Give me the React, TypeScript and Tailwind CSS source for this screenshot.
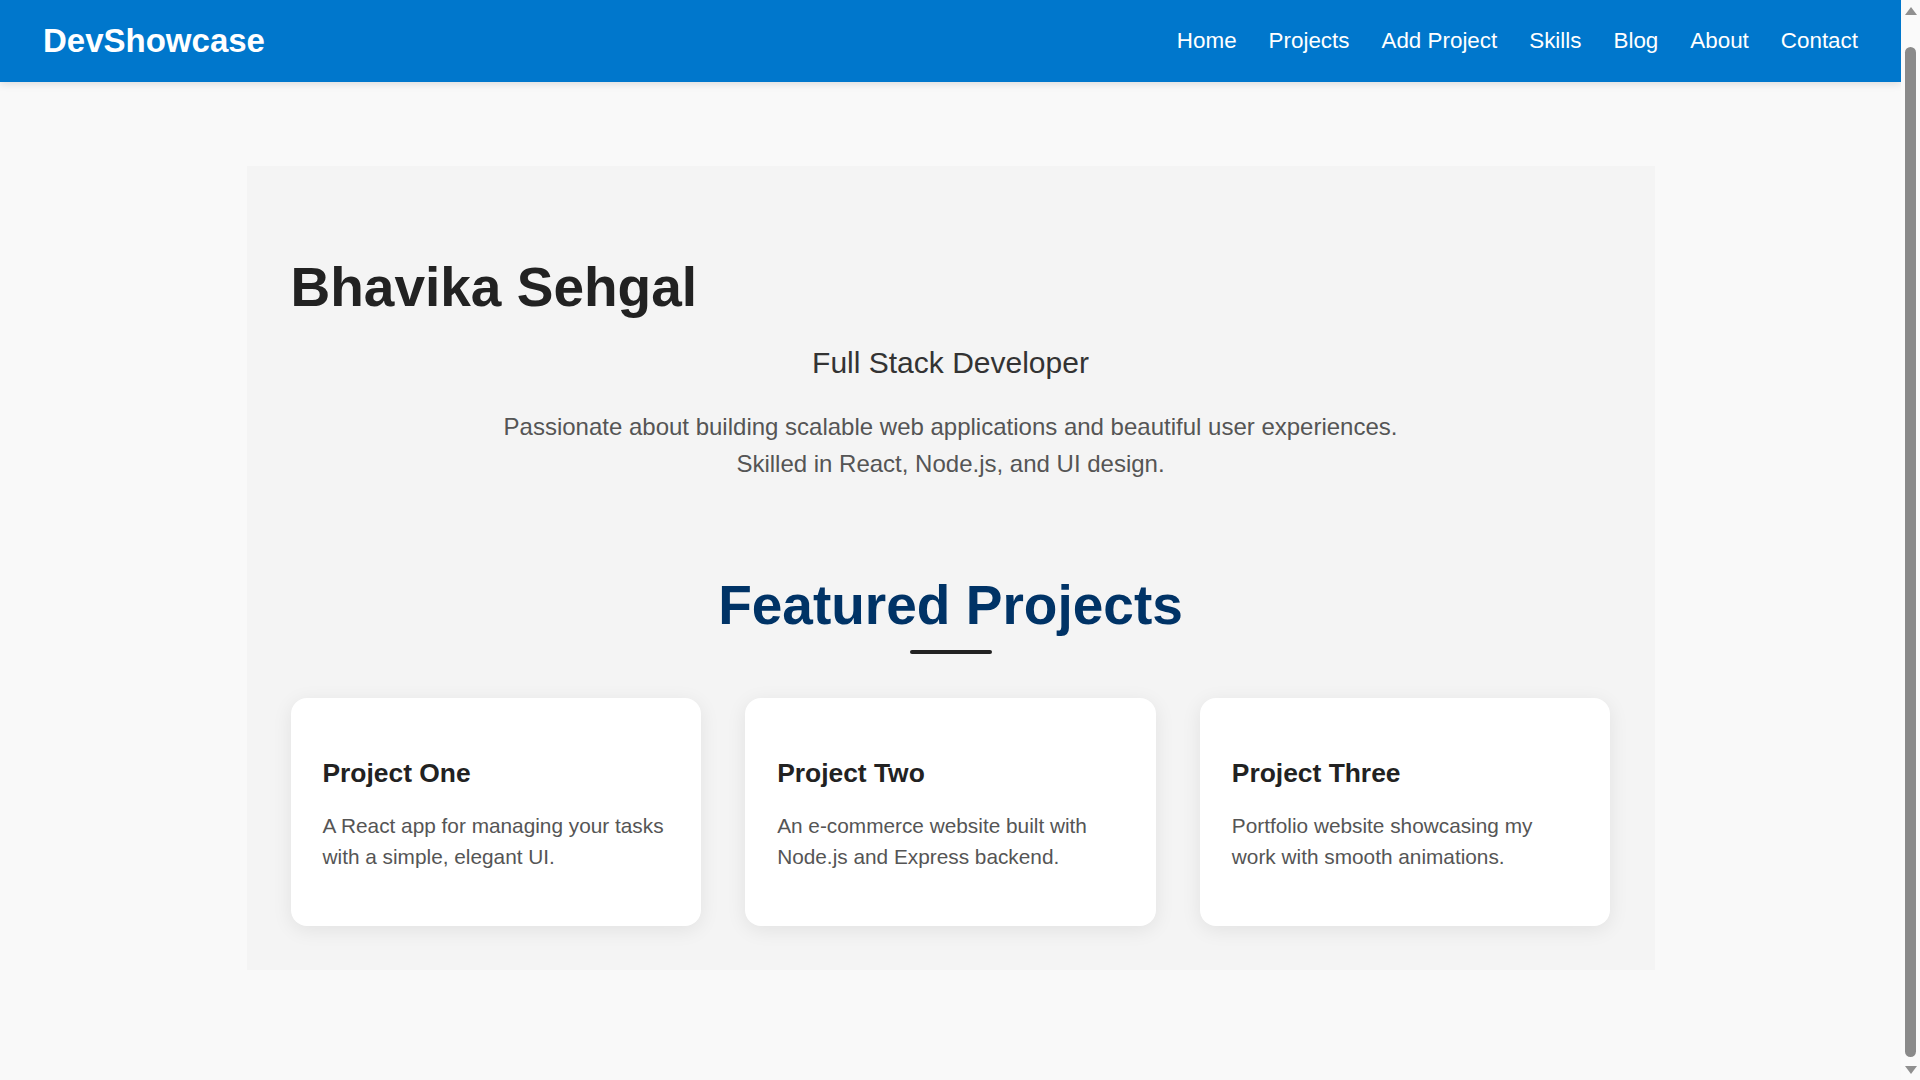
import React from "react";

const links = ["Home", "Projects", "Add Project", "Skills", "Blog", "About", "Contact"];

const projects = [
  { title: "Project One", desc: "A React app for managing your tasks with a simple, elegant UI." },
  { title: "Project Two", desc: "An e-commerce website built with Node.js and Express backend." },
  { title: "Project Three", desc: "Portfolio website showcasing my work with smooth animations." },
];

function Scrollbar() {
  return (
    <div className="flex h-screen w-[19px] shrink-0 flex-col items-center bg-[#fafafa] pt-[7px] pb-[6px]">
      <svg width="12" height="8" viewBox="0 0 12 8">
        <polygon points="6,0 12,8 0,8" fill="#909090" />
      </svg>
      <div className="mt-[32px] w-[11px] flex-1 rounded-full bg-[#8a8a8a]" />
      <svg className="mt-[9px]" width="12" height="8" viewBox="0 0 12 8">
        <polygon points="0,0 12,0 6,8" fill="#909090" />
      </svg>
    </div>
  );
}

export default function App() {
  return (
    <div
      className="flex h-screen overflow-hidden bg-[#f9f9f9]"
      style={{ fontFamily: '"Liberation Sans", Arial, sans-serif' }}
    >
      <div className="min-w-0 flex-1 overflow-hidden">
        <nav className="relative z-10 flex h-[82px] items-center justify-between bg-[#0077cc] pl-[43px] pr-[43px] shadow-[0_2px_8px_rgba(0,0,0,0.12)]">
          <div className="text-[33px] font-bold leading-[38px] text-white">DevShowcase</div>
          <ul className="flex items-center gap-[32px]">
            {links.map((l) => (
              <li key={l} className="text-[22.4px] leading-[28px] text-white">
                {l}
              </li>
            ))}
          </ul>
        </nav>

        <main className="pt-[84px] pb-[150px]">
          <section className="mx-auto w-[1408px] bg-[#f4f4f4] px-[44px] pt-[90px] pb-[44px]">
            <h1 className="text-[55px] font-bold leading-[63px] text-[#222222]">Bhavika Sehgal</h1>
            <h2 className="mt-[26px] text-center text-[30px] leading-[36px] text-[#333333]">
              Full Stack Developer
            </h2>
            <p className="mx-auto mt-[27px] max-w-[940px] text-center text-[24px] leading-[37px] text-[#555555]">
              Passionate about building scalable web applications and beautiful user experiences. Skilled in React,
              Node.js, and UI design.
            </p>

            <h2 className="mt-[92px] text-center text-[55px] font-bold leading-[63px] text-[#003366]">
              Featured Projects
            </h2>
            <div className="mx-auto mt-[13px] h-[4px] w-[82px] rounded-[2px] bg-[#222222]" />

            <div className="mt-[44px] grid grid-cols-3 gap-[44px]">
              {projects.map((p) => (
                <div
                  key={p.title}
                  className="rounded-[16px] bg-white p-[32px] shadow-[0_4px_20px_rgba(0,0,0,0.08)]"
                >
                  <h3 className="mt-[28px] text-[26.4px] font-bold leading-[30px] text-[#222222]">{p.title}</h3>
                  <p className="mt-[23px] mb-[21px] text-[20.8px] leading-[30.8px] text-[#555555]">{p.desc}</p>
                </div>
              ))}
            </div>
          </section>
        </main>
      </div>
      <Scrollbar />
    </div>
  );
}
